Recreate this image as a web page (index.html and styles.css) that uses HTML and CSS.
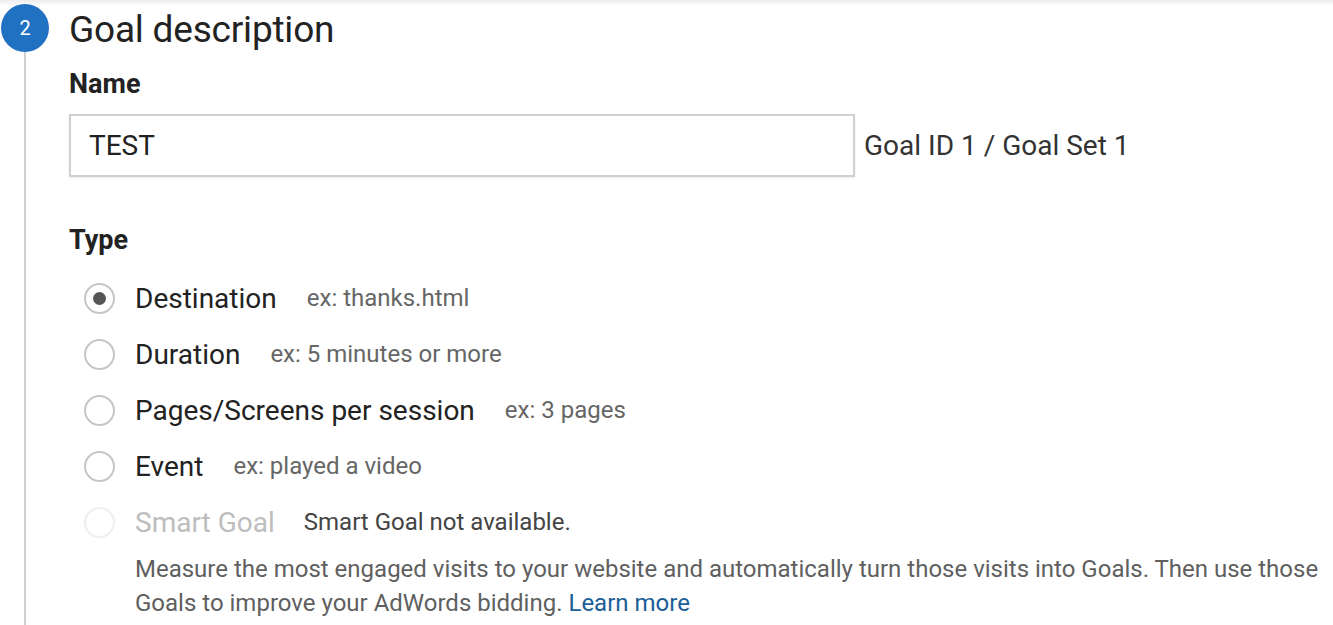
FILE: index.html
```html
<!DOCTYPE html>
<html lang="en">
<head>
  <meta charset="UTF-8">
  <meta name="viewport" content="width=device-width, initial-scale=1.0">
  <title>Goal description</title>
  <link rel="stylesheet" href="styles.css">
</head>
<body>
  <div class="topShadow"></div>
  <section class="step">
    <div class="rail">
      <div class="badge">2</div>
      <div class="line"></div>
    </div>
    <div class="content">
      <h1>Goal description</h1>

      <h2>Name</h2>
      <div class="nameRow">
        <input type="text" class="nameInput" value="TEST">
        <span class="goalId">Goal ID 1 / Goal Set 1</span>
      </div>

      <h2 class="typeTitle">Type</h2>
      <ul class="types">
        <li class="type">
          <span class="radio checked"></span>
          <span class="label">Destination</span>
          <span class="hint">ex: thanks.html</span>
        </li>
        <li class="type">
          <span class="radio"></span>
          <span class="label">Duration</span>
          <span class="hint">ex: 5 minutes or more</span>
        </li>
        <li class="type">
          <span class="radio"></span>
          <span class="label">Pages/Screens per session</span>
          <span class="hint">ex: 3 pages</span>
        </li>
        <li class="type">
          <span class="radio"></span>
          <span class="label">Event</span>
          <span class="hint">ex: played a video</span>
        </li>
        <li class="type disabled">
          <span class="radio"></span>
          <span class="label">Smart Goal</span>
          <span class="note">Smart Goal not available.</span>
        </li>
      </ul>
      <p class="smartInfo">Measure the most engaged visits to your website and automatically turn those visits into Goals. Then use those Goals to improve your AdWords bidding. <a href="#">Learn more</a></p>
    </div>
  </section>
</body>
</html>
```

FILE: styles.css
```css
body {
  font-family: Roboto, "Liberation Sans", Arial, sans-serif;
  margin: 0;
  padding: 0;
  background: #fff;
  color: #222;
  overflow: hidden;
}
.topShadow {
  height: 6px;
  margin-bottom: -6px;
  background: linear-gradient(#ececec, #fff);
}
.step {
  display: flex;
  height: 625px;
}
.rail {
  flex: 0 0 50px;
  display: flex;
  flex-direction: column;
  align-items: center;
  padding-top: 4px;
}
.badge {
  width: 48px;
  height: 48px;
  border-radius: 50%;
  background: #2171c3;
  color: #fff;
  font-size: 20px;
  line-height: 48px;
  text-align: center;
}
.line {
  flex: 1;
  width: 2px;
  background: #cfcfcf;
}
.content {
  flex: 1;
  padding-left: 19px;
  padding-right: 10px;
}
h1 {
  font-size: 37px;
  font-weight: 400;
  margin: 10px 0 0;
  line-height: 40px;
  letter-spacing: -0.2px;
}
h2 {
  font-size: 27px;
  font-weight: 700;
  margin: 19px 0 0;
  line-height: 30px;
}
.nameRow {
  display: flex;
  align-items: center;
  margin-top: 15px;
}
.nameInput {
  width: 786px;
  height: 63px;
  box-sizing: border-box;
  border: 2px solid #d0d0d0;
  box-shadow: 0 1px 2px rgba(0,0,0,0.08);
  padding: 0 18px;
  font-family: inherit;
  font-size: 28px;
  color: #222;
  outline: none;
}
.goalId {
  font-size: 28px;
  margin-left: 9px;
  color: #333;
}
.typeTitle {
  margin-top: 48px;
}
.types {
  list-style: none;
  margin: 15px 0 0;
  padding: 0;
}
.type {
  display: flex;
  align-items: center;
  height: 56px;
}
.radio {
  width: 31px;
  height: 31px;
  box-sizing: border-box;
  border: 2px solid #c6c6c6;
  border-radius: 50%;
  margin-left: 15px;
  margin-right: 20px;
  position: relative;
}
.radio.checked::after {
  content: "";
  position: absolute;
  left: 7px;
  top: 7px;
  width: 13px;
  height: 13px;
  border-radius: 50%;
  background: #555;
}
.label {
  font-size: 28px;
  color: #222;
}
.hint {
  font-size: 24px;
  color: #666;
  margin-left: 30px;
}
.disabled .radio {
  border-color: #eee;
}
.disabled .label {
  color: #bdbdbd;
}
.note {
  font-size: 24px;
  color: #444;
  margin-left: 29px;
}
.smartInfo {
  margin: 2px 0 0 66px;
  font-size: 24px;
  line-height: 34px;
  color: #5f5f5f;
}
.smartInfo a {
  color: #1a5e96;
  text-decoration: none;
}
```
